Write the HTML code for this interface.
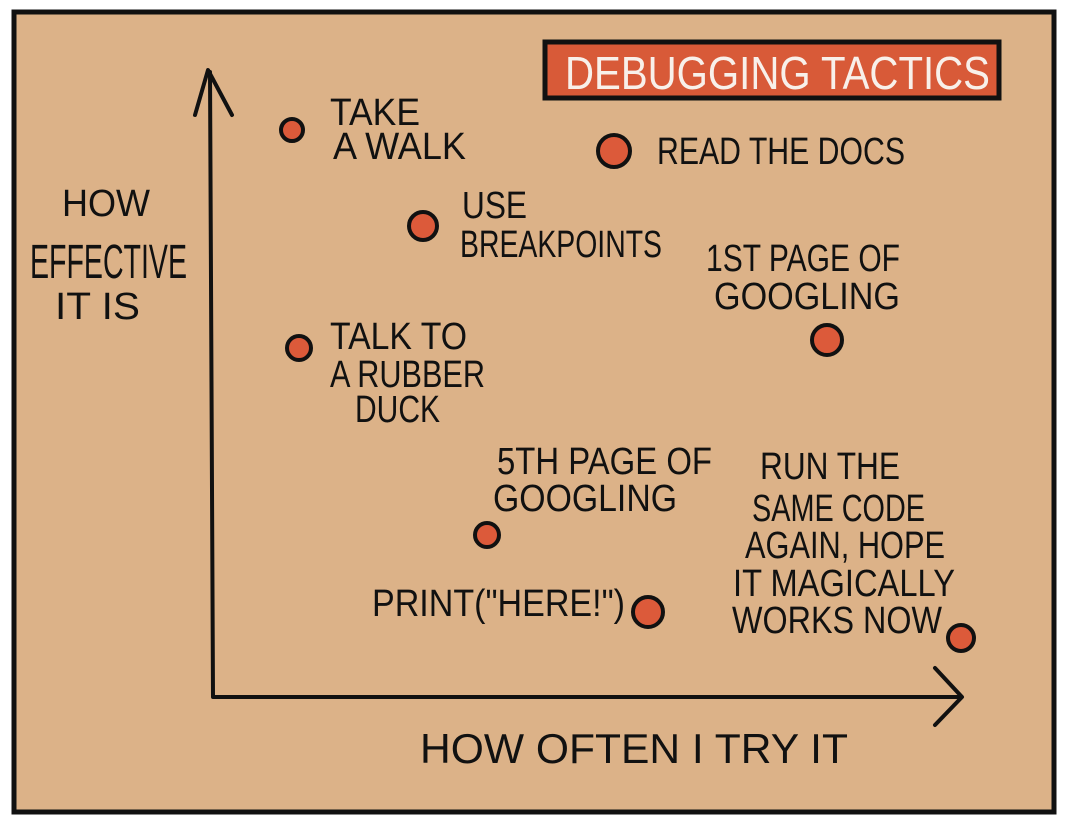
<!DOCTYPE html>
<html><head><style>
html,body{margin:0;padding:0;background:#fff;}
svg{display:block}
text{font-family:"Liberation Sans",sans-serif;fill:#111;}
</style></head><body>
<svg width="1067" height="827" viewBox="0 0 1067 827" xmlns="http://www.w3.org/2000/svg">
<rect x="14" y="12" width="1040" height="800" fill="#dcb288" stroke="#111" stroke-width="5"/>
<rect x="545" y="42" width="454" height="56" fill="#d85a38" stroke="#111" stroke-width="5"/>
<text x="565" y="89" font-size="46" textLength="425" lengthAdjust="spacingAndGlyphs" style="fill:#f8f0ea">DEBUGGING TACTICS</text>
<g stroke="#111" stroke-width="4" fill="none" stroke-linecap="round" stroke-linejoin="round">
<path d="M210 72 L213 697 L960 697"/>
<path d="M195 115 L208 70 L232 115"/>
<path d="M935 668 L962 697 L935 725"/>
</g>
<g fill="#dc5a3a" stroke="#111" stroke-width="4">
<circle cx="292" cy="130" r="11"/>
<circle cx="614" cy="151" r="16"/>
<circle cx="423" cy="226" r="14"/>
<circle cx="827" cy="340" r="15"/>
<circle cx="299" cy="348" r="12"/>
<circle cx="487" cy="535" r="12"/>
<circle cx="648" cy="612" r="15"/>
<circle cx="961" cy="638" r="13"/>
</g>
<g font-size="38">
<text x="330" y="125" textLength="90" lengthAdjust="spacingAndGlyphs">TAKE</text>
<text x="333" y="159" textLength="133" lengthAdjust="spacingAndGlyphs">A WALK</text>
<text x="657" y="164" textLength="248" lengthAdjust="spacingAndGlyphs">READ THE DOCS</text>
<text x="62" y="216" textLength="88" lengthAdjust="spacingAndGlyphs">HOW</text>
<text x="30" y="278" font-size="48" textLength="157" lengthAdjust="spacingAndGlyphs">EFFECTIVE</text>
<text x="55" y="319" textLength="85" lengthAdjust="spacingAndGlyphs">IT IS</text>
<text x="462" y="218" textLength="65" lengthAdjust="spacingAndGlyphs">USE</text>
<text x="460" y="257" textLength="202" lengthAdjust="spacingAndGlyphs">BREAKPOINTS</text>
<text x="706" y="271" textLength="194" lengthAdjust="spacingAndGlyphs">1ST PAGE OF</text>
<text x="714" y="309" textLength="186" lengthAdjust="spacingAndGlyphs">GOOGLING</text>
<text x="330" y="349" textLength="137" lengthAdjust="spacingAndGlyphs">TALK TO</text>
<text x="330" y="387" textLength="155" lengthAdjust="spacingAndGlyphs">A RUBBER</text>
<text x="355" y="422" textLength="85" lengthAdjust="spacingAndGlyphs">DUCK</text>
<text x="497" y="474" textLength="215" lengthAdjust="spacingAndGlyphs">5TH PAGE OF</text>
<text x="493" y="511" textLength="184" lengthAdjust="spacingAndGlyphs">GOOGLING</text>
<text x="760" y="479" textLength="140" lengthAdjust="spacingAndGlyphs">RUN THE</text>
<text x="752" y="521" textLength="173" lengthAdjust="spacingAndGlyphs">SAME CODE</text>
<text x="745" y="558" textLength="200" lengthAdjust="spacingAndGlyphs">AGAIN, HOPE</text>
<text x="733" y="596" textLength="222" lengthAdjust="spacingAndGlyphs">IT MAGICALLY</text>
<text x="732" y="633" textLength="210" lengthAdjust="spacingAndGlyphs">WORKS NOW</text>
<text x="372" y="616" textLength="253" lengthAdjust="spacingAndGlyphs">PRINT("HERE!")</text>
<text x="420" y="763" font-size="42" textLength="428" lengthAdjust="spacingAndGlyphs">HOW OFTEN I TRY IT</text>
</g>
</svg>
</body></html>
